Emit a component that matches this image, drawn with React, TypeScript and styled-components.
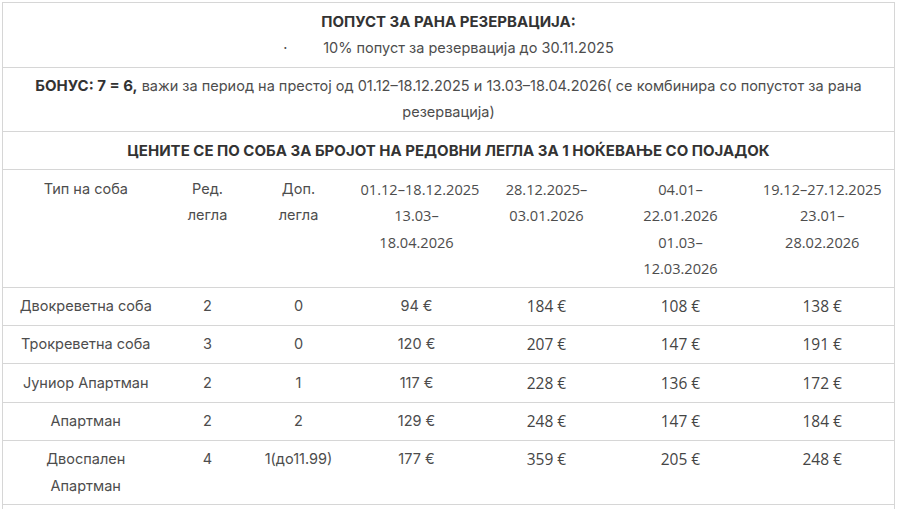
import React from "react";
import styled, { createGlobalStyle } from "styled-components";

const Global = createGlobalStyle`
  html, body { margin: 0; padding: 0; background: #fff; }
  body { font-family: Inter, "Liberation Sans", sans-serif; }
`;

const Page = styled.div`
  padding: 2px 0 0 2px;
`;

const Table = styled.table`
  width: 893px;
  border-collapse: collapse;
  table-layout: fixed;
  font-family: Inter, "Liberation Sans", sans-serif;
  font-size: 14.5px;
  line-height: 26.3px;
  color: #4d4d4d;
  border: 1px solid #d6d6d6;
`;

const Row = styled.tr`
  border-bottom: 1px solid #d6d6d6;
`;

const Cell = styled.td<{ $alt?: boolean; $bold?: boolean }>`
  padding: 5.5px 10px;
  text-align: center;
  vertical-align: top;
  line-height: 26.3px;
  font-family: ${(p) => (p.$alt ? '"Open Sans", Inter, sans-serif' : 'Inter, "Liberation Sans", sans-serif')};
  font-size: ${(p) => (p.$bold ? "15px" : p.$alt ? "14.6px" : "14.5px")};
  font-weight: ${(p) => (p.$bold ? 700 : 400)};
  color: ${(p) => (p.$bold ? "#333" : "#4d4d4d")};
`;

const PriceCell = styled(Cell)`
  font-family: "Open Sans", Inter, sans-serif;
  font-size: 15.5px;
  color: #454545;
`;

const Strong = styled.strong`
  font-size: 15px;
  font-weight: 700;
  color: #333;
`;

const Bullet = styled.span`
  display: inline-block;
  width: 40px;
  text-align: left;
`;

const Line = styled.span`
  display: block;
  white-space: nowrap;
`;

const Filler = styled.td`
  height: 40px;
`;

const Lines = ({ items }: { items: string[] }) => (
  <>
    {items.map((t, i) => (
      <Line key={i}>{t}</Line>
    ))}
  </>
);

const rows: [string, string, string, string, string, string, string][] = [
  ["Двокреветна соба", "2", "0", "94 €", "184 €", "108 €", "138 €"],
  ["Трокреветна соба", "3", "0", "120 €", "207 €", "147 €", "191 €"],
  ["Јуниор Апартман", "2", "1", "117 €", "228 €", "136 €", "172 €"],
  ["Апартман", "2", "2", "129 €", "248 €", "147 €", "184 €"],
  ["Двоспален Апартман", "4", "1(до11.99)", "177 €", "359 €", "205 €", "248 €"],
];

export default function App() {
  return (
    <Page>
      <Global />
      <Table>
        <colgroup>
          <col style={{ width: 166 }} />
          <col style={{ width: 78 }} />
          <col style={{ width: 104 }} />
          <col style={{ width: 132 }} />
          <col style={{ width: 128 }} />
          <col style={{ width: 140 }} />
          <col />
        </colgroup>
        <tbody>
          <Row>
            <Cell colSpan={7}>
              <Strong>ПОПУСТ ЗА РАНА РЕЗЕРВАЦИЈА:</Strong>
              <br />
              <Bullet>·</Bullet>10% попуст за резервација до 30.11.2025
            </Cell>
          </Row>
          <Row>
            <Cell colSpan={7}>
              <Strong>БОНУС: 7 = 6,</Strong> важи за период на престој од 01.12–18.12.2025 и 13.03–18.04.2026( се комбинира со попустот за рана резервација)
            </Cell>
          </Row>
          <Row>
            <Cell colSpan={7} $bold>
              ЦЕНИТЕ СЕ ПО СОБА ЗА БРОЈОТ НА РЕДОВНИ ЛЕГЛА ЗА 1 НОЌЕВАЊЕ СО ПОЈАДОК
            </Cell>
          </Row>
          <Row>
            <Cell>Тип на соба</Cell>
            <Cell>
              <Lines items={["Ред.", "легла"]} />
            </Cell>
            <Cell>
              <Lines items={["Доп.", "легла"]} />
            </Cell>
            <Cell $alt>
              <Lines items={["01.12–18.12.2025", "13.03–", "18.04.2026"]} />
            </Cell>
            <Cell $alt>
              <Lines items={["28.12.2025–", "03.01.2026"]} />
            </Cell>
            <Cell $alt>
              <Lines items={["04.01–", "22.01.2026", "01.03–", "12.03.2026"]} />
            </Cell>
            <Cell $alt>
              <Lines items={["19.12–27.12.2025", "23.01–", "28.02.2026"]} />
            </Cell>
          </Row>
          {rows.map((r) => (
            <Row key={r[0]}>
              <Cell>{r[0]}</Cell>
              <Cell>{r[1]}</Cell>
              <Cell>{r[2]}</Cell>
              <Cell>{r[3]}</Cell>
              <PriceCell>{r[4]}</PriceCell>
              <PriceCell>{r[5]}</PriceCell>
              <PriceCell>{r[6]}</PriceCell>
            </Row>
          ))}
          <Row>
            <Filler colSpan={7} />
          </Row>
        </tbody>
      </Table>
    </Page>
  );
}
